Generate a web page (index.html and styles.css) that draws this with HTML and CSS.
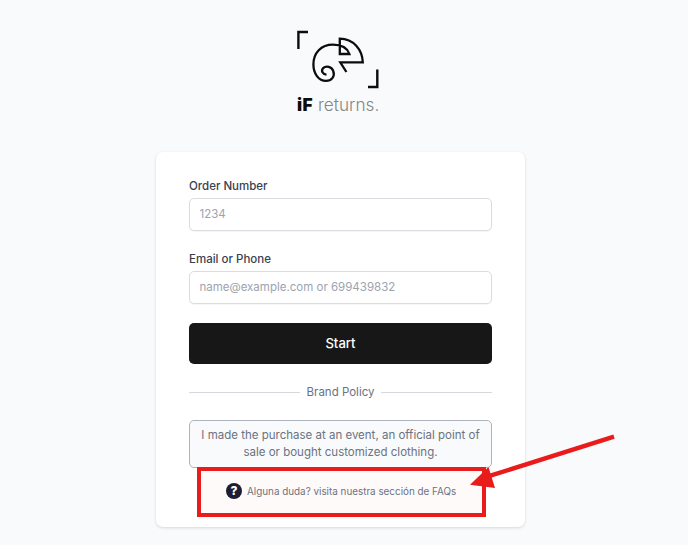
FILE: index.html
```html
<!DOCTYPE html>
<html lang="en">
<head>
    <meta charset="UTF-8">
    <meta name="viewport" content="width=device-width, initial-scale=1.0">
    <title>iF returns</title>
    <link rel="stylesheet" href="styles.css">
</head>
<body>

<div class="page">
    <!-- Logo -->
    <div class="logo">
        <svg class="logo-mark" width="84" height="62" viewBox="0 0 84 62" fill="none" stroke="#0c0c0c">
            <path d="M2.4 21V4H12" stroke-width="2.4"/>
            <path d="M81.3 41.5V59H72" stroke-width="2.4"/>
            <path d="M30.5 46.6C26.6 46.4 24.8 42.7 27.1 40.2C30.2 37.2 35.8 38.7 37.3 43.2C39.2 48.7 35.4 52.9 30 52.9C22.6 52.9 17.4 45.5 17.4 36.5C17.4 25 25 16.6 37 16.6C45.5 16.6 51.3 19.8 53.4 26H43.8V10.7C57.5 10.9 66.3 21.5 66.8 34.4H44.3L50.4 44" stroke-width="2.3"/>
        </svg>
        <div class="logo-text"><strong>iF</strong><span>returns.</span></div>
    </div>

    <div class="card">
        <form class="form">
            <label for="order">Order Number</label>
            <input type="text" id="order" placeholder="1234">

            <label for="contact">Email or Phone</label>
            <input type="text" id="contact" placeholder="name@example.com or 699439832">

            <button type="button">Start</button>
        </form>

        <div class="divider">Brand Policy</div>

        <a class="policy">I made the purchase at an event, an official point of sale or bought customized clothing.</a>

        <!-- FAQ -->
        <div class="faq">
            <span class="faq-icon">?</span>
            <span class="faq-text">Alguna duda? visita nuestra sección de FAQs</span>
        </div>
    </div>

    <svg class="arrow" width="150" height="60" viewBox="0 0 150 60">
        <path d="M144 6.7L18 46.4" stroke="#e91b1b" stroke-width="4.4"/>
        <path d="M0 54.7L18.5 37L25 58Z" fill="#e91b1b"/>
    </svg>
</div>

</body>
</html>
```
FILE: styles.css
```css
* {
    box-sizing: border-box;
}
body {
    margin: 0;
    background: #f9fafb;
    font-family: Inter, sans-serif;
    color: #374151;
}
.page {
    position: relative;
    height: 545px;
    overflow: hidden;
    padding: 28px 7px 0 0;
    display: flex;
    flex-direction: column;
    align-items: center;
}
.logo {
    width: 89px;
    height: 124px;
}
.logo-mark {
    display: block;
}
.logo-text {
    display: flex;
    gap: 5px;
    margin: 3px 0 0 1px;
    font-size: 17.2px;
    line-height: 24px;
    color: #858687;
}
.logo-text strong {
    color: #0c0c0c;
    font-weight: 900;
    letter-spacing: 0.4px;
}
.logo-text span {
    font-weight: 300;
}
.card {
    width: 369px;
    height: 375px;
    padding: 26px 33px 0;
    background: #fff;
    border-radius: 7px;
    box-shadow: 0 1px 3px rgba(0, 0, 0, 0.14);
}
.form {
    display: flex;
    flex-direction: column;
}
label {
    font-size: 11.5px;
    font-weight: 500;
    line-height: 16px;
    margin-bottom: 4px;
}
input {
    height: 33px;
    padding: 0 9.5px 1px;
    border: 1px solid #d9dce1;
    border-radius: 5px;
    margin-bottom: 20px;
    background: #fff;
    font: 11.5px Inter, sans-serif;
    box-shadow: 0 1px 1px rgba(0, 0, 0, 0.04);
}
input::placeholder {
    color: #9ca3af;
}
button {
    height: 41px;
    margin-top: -1px;
    padding: 0 0 1px;
    border: none;
    border-radius: 5px;
    background: #171717;
    color: #fff;
    font: 500 13.1px Inter, sans-serif;
}
.divider {
    display: flex;
    align-items: center;
    gap: 7px;
    margin-top: 20px;
    font-size: 11.5px;
    line-height: 16px;
    color: #6b7280;
}
.divider::before, .divider::after {
    content: "";
    flex: 1;
    height: 1px;
    background: #d5d8dd;
}
.policy {
    display: block;
    height: 48px;
    margin-top: 20px;
    padding: 6px 8px;
    border: 1px solid #aeb4be;
    border-radius: 5px;
    background: #f9fafb;
    font-size: 11.5px;
    line-height: 17px;
    text-align: center;
    color: #6b7280;
}
.faq {
    display: flex;
    align-items: center;
    gap: 5px;
    width: 289px;
    height: 50px;
    margin: -1px 0 0 8px;
    padding: 0 0 3px 25px;
    border: 4px solid #e91b1b;
    background: #fffafa;
    position: relative;
}
.faq-icon {
    width: 16px;
    height: 16px;
    border-radius: 50%;
    background: #1d1d33;
    color: #fff;
    font-size: 12px;
    font-weight: 800;
    line-height: 16px;
    text-align: center;
}
.faq-text {
    font-size: 9.87px;
    color: #6b7280;
    white-space: nowrap;
}
.arrow {
    position: absolute;
    left: 470px;
    top: 430px;
}
```
